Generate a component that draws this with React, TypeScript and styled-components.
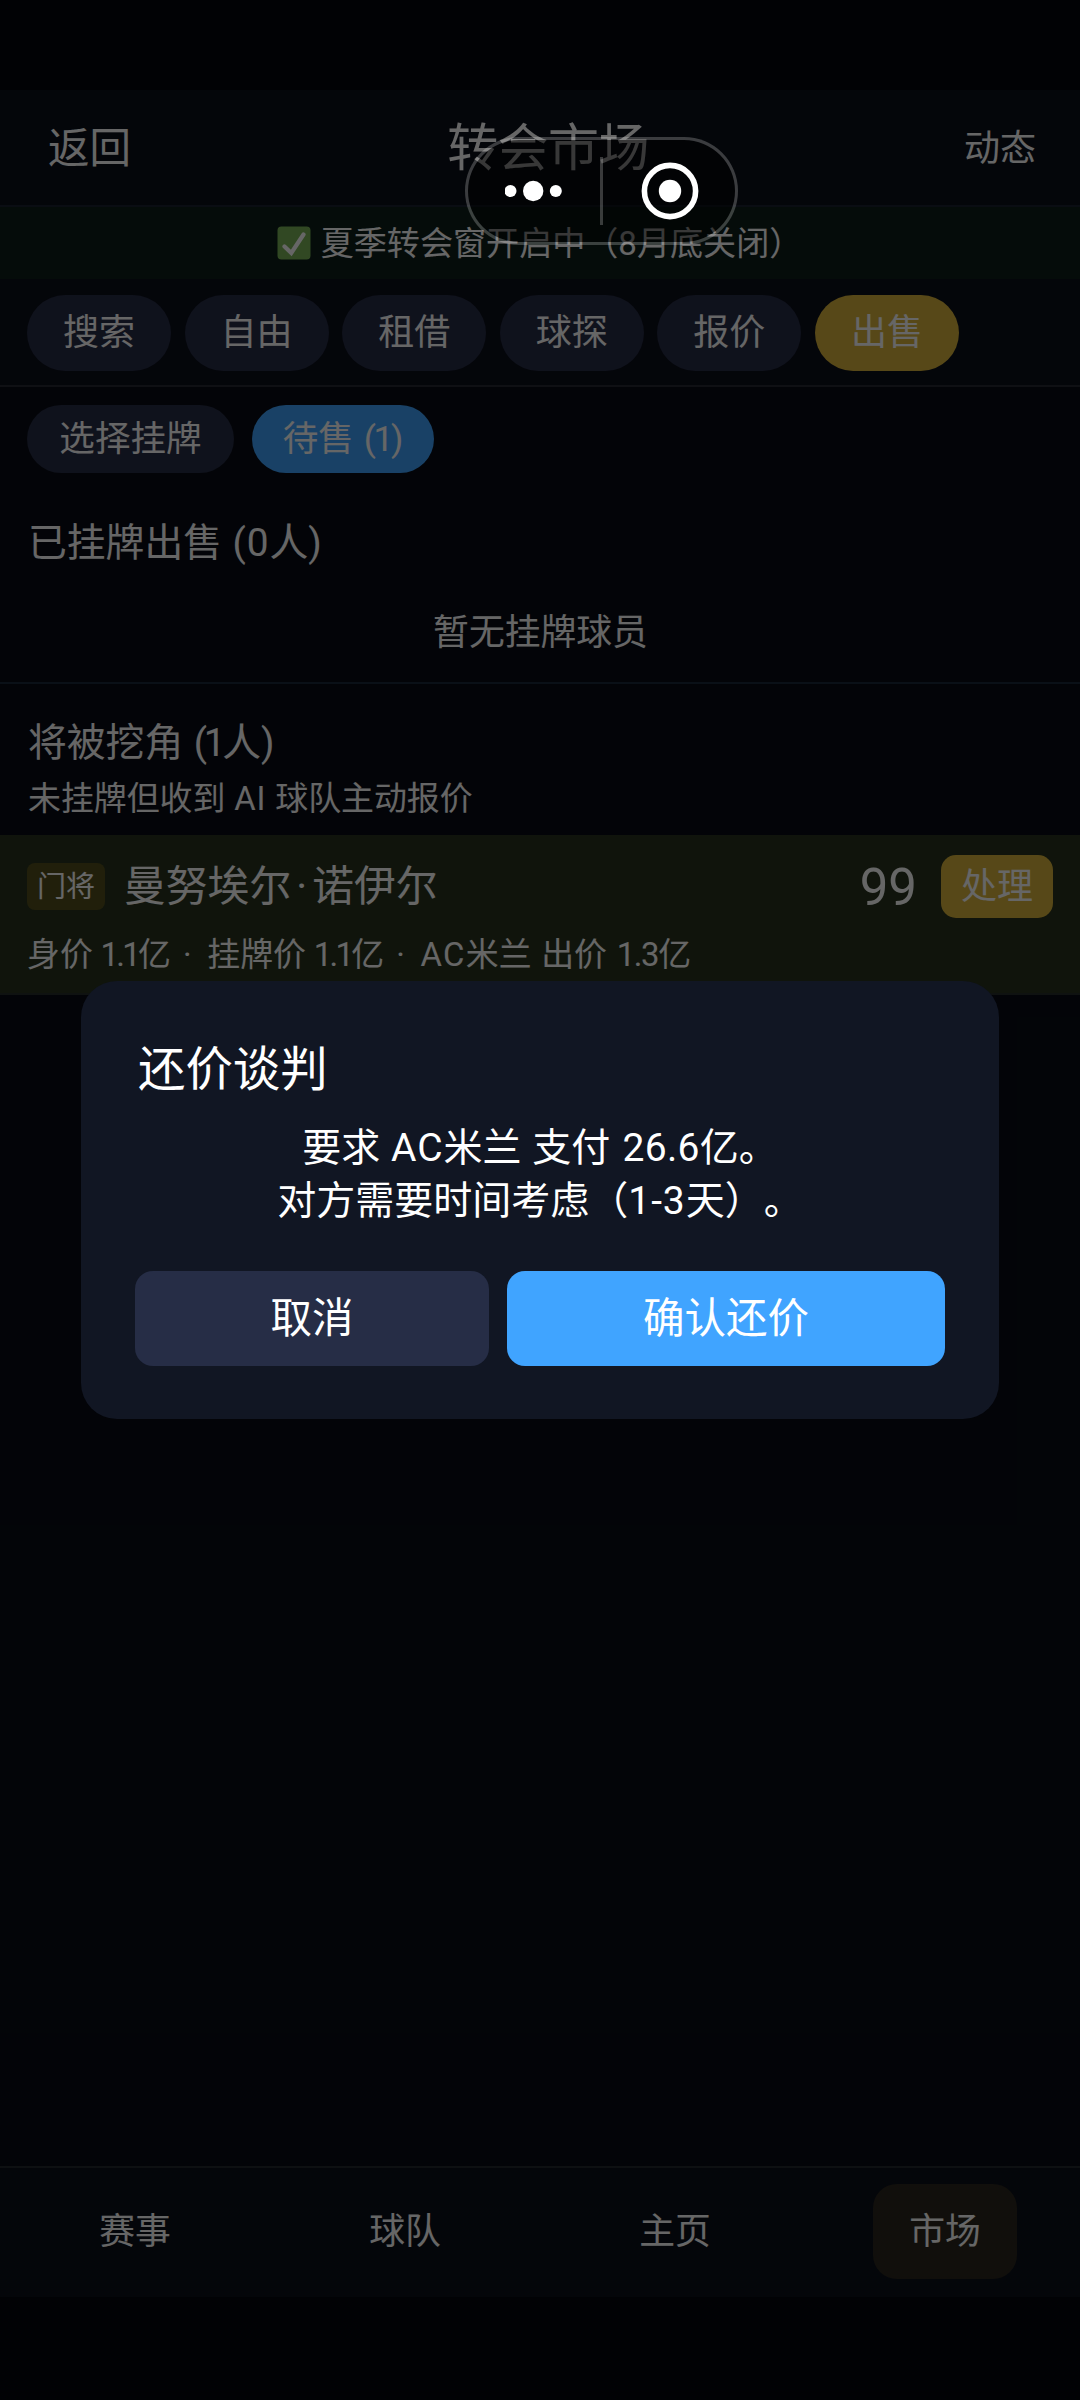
import React from "react";
import styled, { createGlobalStyle } from "styled-components";

const GlobalStyle = createGlobalStyle`
  *, *::before, *::after { box-sizing: border-box; }
  html, body { margin: 0; padding: 0; background: #020306; }
  body {
    font-family: Roboto, "Noto Sans CJK SC", sans-serif;
    color: #fff;
    text-spacing-trim: space-all;
  }
  button { font: inherit; color: inherit; border: 0; margin: 0; padding: 0; }
`;

const Screen = styled.div`
  position: relative;
  width: 1080px;
  height: 2400px;
  display: flex;
  flex-direction: column;
  overflow: hidden;
  padding: 90px 0 103px;
  background: #03050e;
`;

const Header = styled.header`
  flex: none;
  height: 117px;
  display: grid;
  grid-template-columns: 1fr auto 1fr;
  align-items: center;
  padding: 3px 44px 0 48px;
  background: #0b0f1b;
  border-bottom: 2px solid #1a2230;
`;

const HeaderLink = styled.span<{ $size: number; $end?: boolean }>`
  font-size: ${(p) => p.$size}px;
  line-height: 60px;
  justify-self: ${(p) => (p.$end ? "end" : "start")};
`;

const HeaderTitle = styled.h1`
  margin: 0 -6px 0 6px;
  font-size: 51px;
  line-height: 72px;
  font-weight: 400;
  letter-spacing: -0.6px;
`;

const Notice = styled.div`
  flex: none;
  height: 72px;
  display: flex;
  align-items: center;
  justify-content: center;
  gap: 10px;
  padding-right: 1px;
  font-size: 33.1px;
  line-height: 48px;
  background: #0d1e1b;
`;

const NoticeText = styled.span`
  padding-top: 1px;
`;

const TabBar = styled.nav`
  flex: none;
  height: 108px;
  display: flex;
  align-items: flex-start;
  gap: 13.6px;
  padding: 16px 27px 0;
  background: #0b0f1b;
  border-bottom: 2px solid #262a32;
`;

const Tab = styled.button<{ $active?: boolean }>`
  width: 144px;
  height: 76px;
  border-radius: 38px;
  font-size: 36px;
  line-height: 76px;
  background: ${(p) => (p.$active ? "#d9b43c" : "#272d46")};
`;

const Content = styled.main`
  flex: 1;
  min-height: 0;
  display: flex;
  flex-direction: column;
  background: #080c15;
`;

const SubTabs = styled.div`
  display: flex;
  gap: 18px;
  padding: 18px 27px 0;
`;

const SubTab = styled.button<{ $active?: boolean; $width: number }>`
  width: ${(p) => p.$width}px;
  height: 68px;
  border-radius: 34px;
  font-size: 35.6px;
  line-height: 68px;
  background: ${(p) => (p.$active ? "#40a4ff" : "#272d46")};
`;

const Listed = styled.section`
  height: 211px;
  padding: 40px 27px 0 28px;
  border-bottom: 2px solid #1a2a3b;
`;

const Poached = styled.section`
  height: 151px;
  padding: 29px 27px 0 28px;
`;

const SectionTitle = styled.h2`
  margin: 0;
  font-size: 38.8px;
  line-height: 60px;
  font-weight: 400;
`;

const SectionHint = styled.p`
  margin: 0;
  font-size: 32.9px;
  line-height: 51px;
`;

const Empty = styled.p`
  margin: 33px 0 0;
  font-size: 35.8px;
  line-height: 55px;
  text-align: center;
`;

const PlayerRow = styled.article`
  height: 160px;
  padding: 20px 27px 0;
  background: #28341e;
  border-bottom: 2px solid #262f2b;
`;

const PlayerTop = styled.div`
  display: flex;
  align-items: center;
  height: 63px;
`;

const Position = styled.span`
  width: 78px;
  height: 47px;
  border-radius: 8px;
  font-size: 29px;
  line-height: 48px;
  text-align: center;
  background: #544f1c;
`;

const PlayerName = styled.span`
  flex: 1;
  margin-left: 19px;
  padding-top: 1px;
  font-size: 41.8px;
  line-height: 60px;
`;

const NameDot = styled.span`
  display: inline-block;
  width: 21px;
  text-align: center;
`;

const Rating = styled.span`
  margin-right: 24px;
  padding-top: 3px;
  font-size: 51px;
  line-height: 60px;
`;

const HandleButton = styled.button`
  width: 112px;
  height: 63px;
  border-radius: 15px;
  font-size: 36px;
  line-height: 64px;
  background: #d9b43c;
`;

const PlayerInfo = styled.p`
  margin: 12px 0 0;
  font-size: 32.9px;
  line-height: 49px;
  white-space: pre;
`;

/* Latin runs sit between Han glyphs with their own tracking. */
const Run = styled.span<{ $track: number }>`
  letter-spacing: ${(p) => p.$track}px;
  white-space: pre;
`;

const BottomNav = styled.nav`
  flex: none;
  height: 131px;
  display: grid;
  grid-template-columns: repeat(4, 1fr);
  justify-items: center;
  padding-top: 16px;
  background: #0b0f1b;
  border-top: 2px solid #25282f;
`;

const NavItem = styled.button<{ $active?: boolean }>`
  width: 144px;
  height: 95px;
  border-radius: 24px;
  font-size: 35.8px;
  line-height: 94px;
  background: ${(p) => (p.$active ? "#2b271e" : "transparent")};
`;

const Mask = styled.div`
  position: absolute;
  inset: 0;
  display: flex;
  align-items: center;
  justify-content: center;
  background: rgba(0, 0, 0, 0.6);
`;

const Dialog = styled.div`
  width: 918px;
  height: 438px;
  display: flex;
  flex-direction: column;
  padding: 53px 54px 53px;
  border-radius: 36px;
  background: #111623;
`;

const DialogTitle = styled.h2`
  margin: 0 0 0 3px;
  font-size: 47.4px;
  line-height: 72px;
  font-weight: 400;
`;

const DialogText = styled.p`
  flex: 1;
  margin: 16px 0 0;
  font-size: 39px;
  line-height: 53px;
  text-align: center;
`;

const DialogActions = styled.div`
  display: grid;
  grid-template-columns: 354px 438px;
  gap: 18px;
`;

const DialogButton = styled.button<{ $primary?: boolean }>`
  height: 95px;
  border-radius: 18px;
  font-size: 41.5px;
  line-height: 93px;
  background: ${(p) => (p.$primary ? "#40a4ff" : "#262d46")};
`;

const Capsule = styled.div`
  position: absolute;
  left: 465px;
  top: 137px;
  width: 273px;
  height: 108px;
  display: grid;
  grid-template-columns: 1fr 3px 1fr;
  align-items: center;
  justify-items: center;
  border: 3px solid rgba(255, 255, 255, 0.22);
  border-radius: 54px;
  background: rgba(0, 0, 0, 0.45);
  background-clip: padding-box;
`;

const CapsuleLine = styled.i`
  width: 3px;
  height: 68px;
  background: rgba(255, 255, 255, 0.22);
`;

const CheckIcon = () => (
  <svg width="34" height="34" viewBox="0 0 34 34">
    <rect x="0.5" y="0.5" width="33" height="33" rx="4" fill="#7bb557" />
    <path d="M7.5 20.5 L14.3 27 L26.5 8.5" fill="none" stroke="#fff" strokeWidth="4.2" strokeLinecap="round" strokeLinejoin="miter" />
  </svg>
);

const MoreIcon = () => (
  <svg width="58" height="24" viewBox="0 0 58 24">
    <circle cx="5.5" cy="12" r="6" fill="#fff" />
    <circle cx="28.2" cy="12" r="10.2" fill="#fff" />
    <circle cx="50.8" cy="12" r="6" fill="#fff" />
  </svg>
);

const TargetIcon = () => (
  <svg width="60" height="58" viewBox="0 0 60 58">
    <circle cx="31" cy="29" r="25.6" fill="none" stroke="#fff" strokeWidth="5.6" />
    <circle cx="31" cy="29" r="11.2" fill="#fff" />
  </svg>
);

const tabs = ["搜索", "自由", "租借", "球探", "报价", "出售"];
const navItems = ["赛事", "球队", "主页", "市场"];

export default function App() {
  return (
    <>
      <GlobalStyle />
      <Screen>
        <Header>
          <HeaderLink $size={41.5}>返回</HeaderLink>
          <HeaderTitle>转会市场</HeaderTitle>
          <HeaderLink $size={36} $end>动态</HeaderLink>
        </Header>
        <Notice>
          <CheckIcon />
          <NoticeText>夏季转会窗开启中（8月底关闭）</NoticeText>
        </Notice>
        <TabBar>
          {tabs.map((t) => (
            <Tab key={t} $active={t === "出售"}>{t}</Tab>
          ))}
        </TabBar>
        <Content>
          <SubTabs>
            <SubTab $width={207}>选择挂牌</SubTab>
            <SubTab $width={182} $active>
              待售<Run $track={1}> </Run><Run $track={-2.5}>(1</Run>)
            </SubTab>
          </SubTabs>
          <Listed>
            <SectionTitle>已挂牌出售<Run $track={0.9}>{" (0"}</Run>人)</SectionTitle>
            <Empty>暂无挂牌球员</Empty>
          </Listed>
          <Poached>
            <SectionTitle>将被挖角<Run $track={1}> </Run><Run $track={-3.3}>(1</Run>人)</SectionTitle>
            <SectionHint>未挂牌但收到<Run $track={0.8}>{" AI "}</Run>球队主动报价</SectionHint>
          </Poached>
          <PlayerRow>
            <PlayerTop>
              <Position>门将</Position>
              <PlayerName>曼努埃尔<NameDot>·</NameDot>诺伊尔</PlayerName>
              <Rating>99</Rating>
              <HandleButton>处理</HandleButton>
            </PlayerTop>
            <PlayerInfo>
              身价<Run $track={-0.4}> </Run><Run $track={-2.7}>1.1</Run>亿<Run $track={3.8}>{" · "}</Run>
              挂牌价<Run $track={-0.4}> </Run><Run $track={-2.7}>1.1</Run>亿<Run $track={3.8}>{" · "}</Run>
              <Run $track={1.3}>AC</Run>米兰<Run $track={1.5}> </Run>出价<Run $track={1.5}> </Run><Run $track={-1.4}>1.3</Run>亿
            </PlayerInfo>
          </PlayerRow>
        </Content>
        <BottomNav>
          {navItems.map((t) => (
            <NavItem key={t} $active={t === "市场"}>{t}</NavItem>
          ))}
        </BottomNav>
        <Mask>
          <Dialog>
            <DialogTitle>还价谈判</DialogTitle>
            <DialogText>
              要求<Run $track={1}>{" AC"}</Run>米兰<Run $track={1}> </Run>支付<Run $track={2.5}> </Run><Run $track={0.3}>26.6</Run>亿。
              <br />
              对方需要时间考虑（<Run $track={0.9}>1-3</Run>天）。
            </DialogText>
            <DialogActions>
              <DialogButton>取消</DialogButton>
              <DialogButton $primary>确认还价</DialogButton>
            </DialogActions>
          </Dialog>
        </Mask>
        <Capsule>
          <MoreIcon />
          <CapsuleLine />
          <TargetIcon />
        </Capsule>
      </Screen>
    </>
  );
}
